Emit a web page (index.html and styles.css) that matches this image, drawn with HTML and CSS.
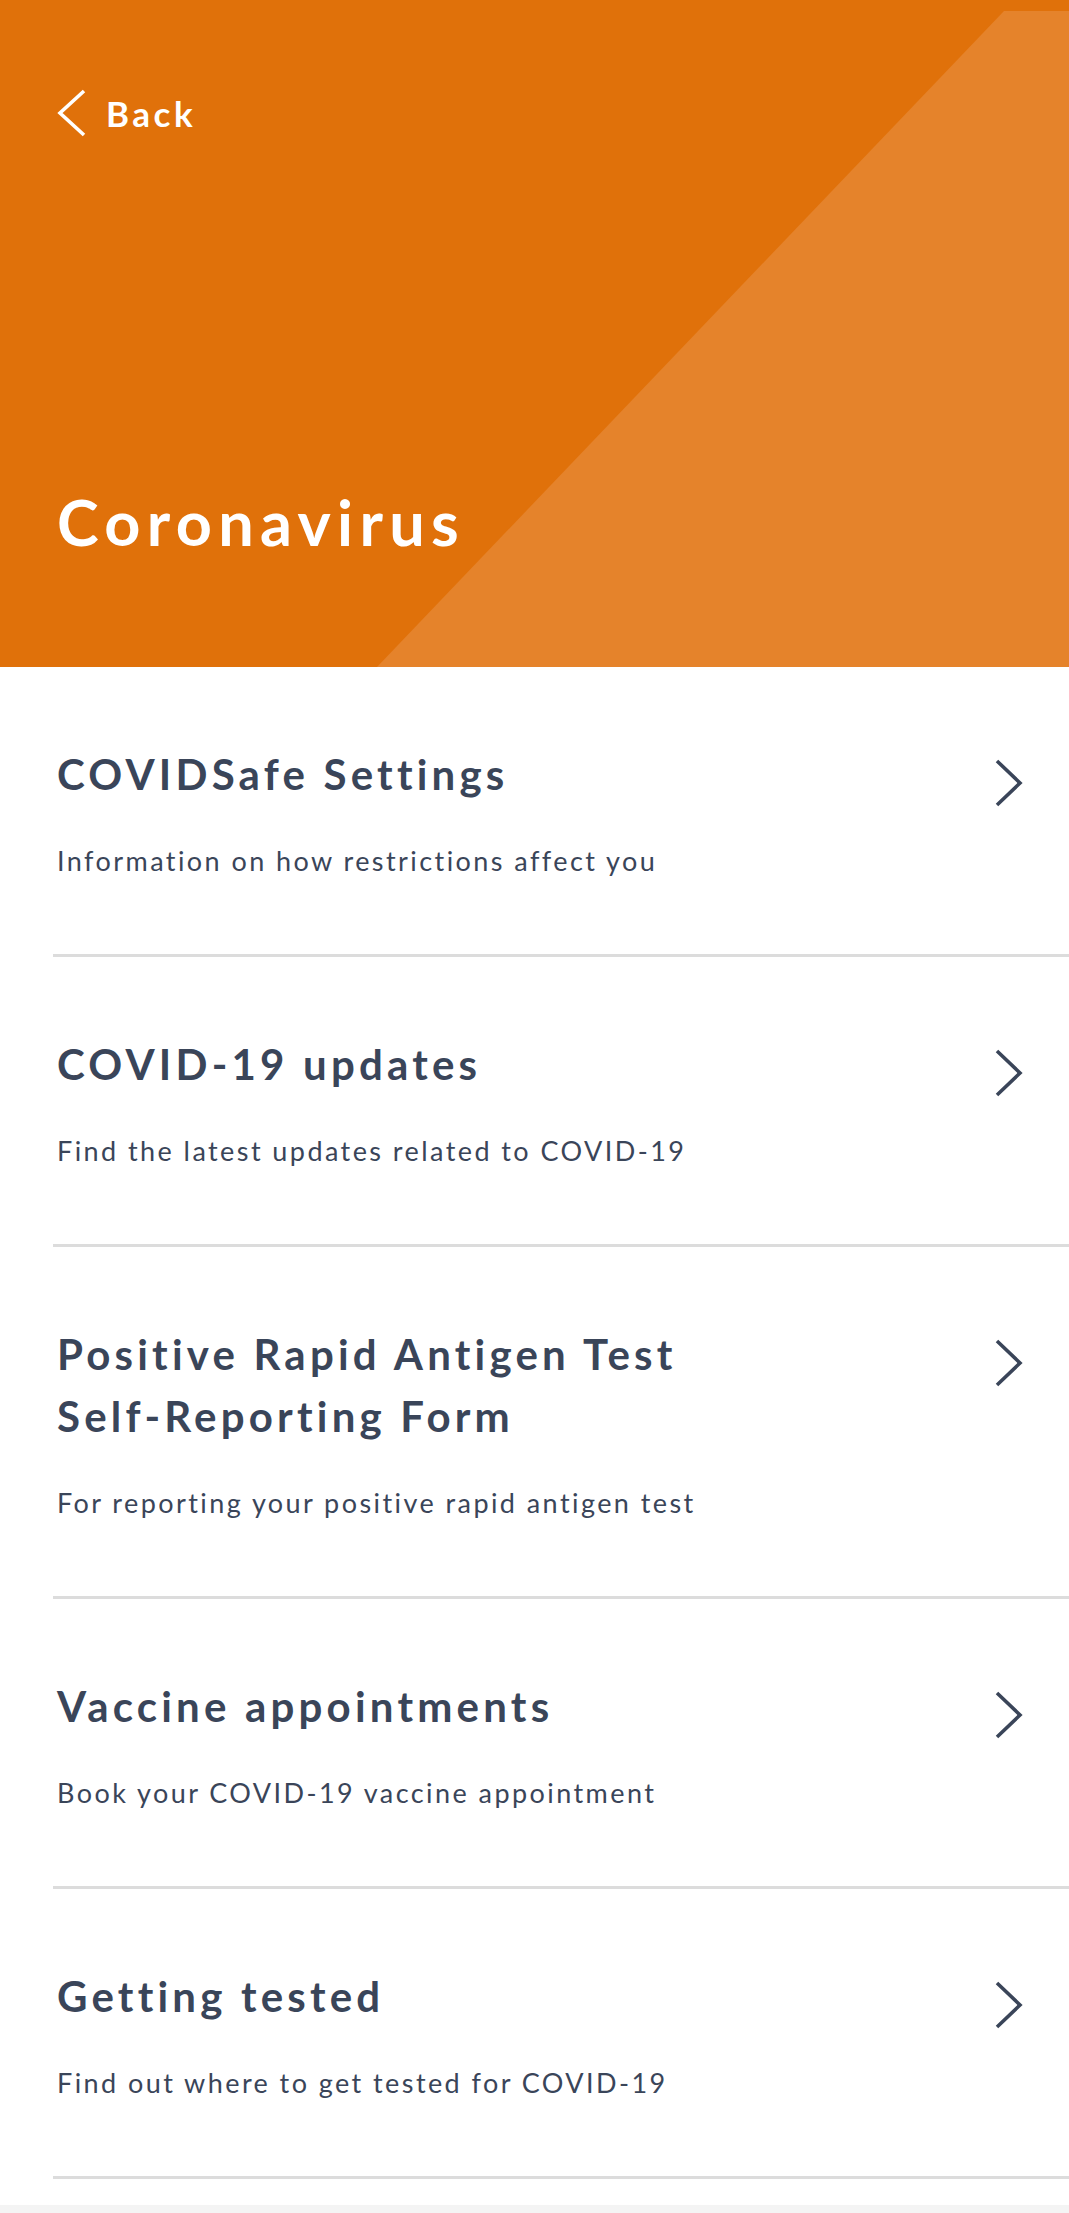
FILE: index.html
```html
<!DOCTYPE html>
<html lang="en">
<head>
<meta charset="utf-8">
<title>Coronavirus</title>
<link rel="stylesheet" href="styles.css">
</head>
<body>
<div class="page">
  <header class="hero">
    <a class="back" href="#">
      <svg class="back-icon" width="30" height="48" viewBox="0 0 30 48" aria-hidden="true">
        <polyline points="27,2 3,24 27,46" fill="none" stroke="#ffffff" stroke-width="3.6" stroke-linejoin="miter"/>
      </svg>
      <span class="back-text">Back</span>
    </a>
    <h1 class="hero-title">Coronavirus</h1>
  </header>
  <ul class="menu">
    <li class="item">
      <div class="item-text">
        <h2 class="item-title">COVIDSafe Settings</h2>
        <p class="item-sub">Information on how restrictions affect you</p>
      </div>
      <svg class="chev" width="30" height="48" viewBox="0 0 30 48" aria-hidden="true"><polyline points="3,2 26,24 3,46" fill="none" stroke="#3a4559" stroke-width="3.6"/></svg>
    </li>
    <li class="item">
      <div class="item-text">
        <h2 class="item-title">COVID-19 updates</h2>
        <p class="item-sub">Find the latest updates related to COVID-19</p>
      </div>
      <svg class="chev" width="30" height="48" viewBox="0 0 30 48" aria-hidden="true"><polyline points="3,2 26,24 3,46" fill="none" stroke="#3a4559" stroke-width="3.6"/></svg>
    </li>
    <li class="item">
      <div class="item-text">
        <h2 class="item-title">Positive Rapid Antigen Test<br>Self-Reporting Form</h2>
        <p class="item-sub">For reporting your positive rapid antigen test</p>
      </div>
      <svg class="chev" width="30" height="48" viewBox="0 0 30 48" aria-hidden="true"><polyline points="3,2 26,24 3,46" fill="none" stroke="#3a4559" stroke-width="3.6"/></svg>
    </li>
    <li class="item">
      <div class="item-text">
        <h2 class="item-title">Vaccine appointments</h2>
        <p class="item-sub">Book your COVID-19 vaccine appointment</p>
      </div>
      <svg class="chev" width="30" height="48" viewBox="0 0 30 48" aria-hidden="true"><polyline points="3,2 26,24 3,46" fill="none" stroke="#3a4559" stroke-width="3.6"/></svg>
    </li>
    <li class="item">
      <div class="item-text">
        <h2 class="item-title">Getting tested</h2>
        <p class="item-sub">Find out where to get tested for COVID-19</p>
      </div>
      <svg class="chev" width="30" height="48" viewBox="0 0 30 48" aria-hidden="true"><polyline points="3,2 26,24 3,46" fill="none" stroke="#3a4559" stroke-width="3.6"/></svg>
    </li>
  </ul>
</div>
</body>
</html>
```

FILE: styles.css
```css
* { box-sizing: border-box; }

html, body {
  margin: 0;
  padding: 0;
}

body {
  background: #f4f4f4;
  font-family: "Lato", "Noto Sans", sans-serif;
  color: #3a4559;
}

.page {
  background: #ffffff;
  padding-bottom: 26px;
}

.hero {
  position: relative;
  height: 667px;
  background: #e0710a;
  display: flex;
  flex-direction: column;
  padding: 89px 0 107px 57px;
  overflow: hidden;
}

.hero::before {
  content: "";
  position: absolute;
  inset: 0;
  background: #e5832b;
  clip-path: polygon(1004px 11px, 100% 11px, 100% 100%, 377px 100%);
}

.back {
  position: relative;
  display: flex;
  align-items: center;
  height: 48px;
  color: #ffffff;
  text-decoration: none;
}

.back-icon {
  display: block;
  margin-right: 19px;
}

.back-text {
  font-size: 35px;
  font-weight: 700;
  line-height: 46px;
  letter-spacing: 0.1em;
}

.hero-title {
  position: relative;
  margin: auto 0 0 0;
  font-size: 63px;
  line-height: 76px;
  font-weight: 700;
  letter-spacing: 0.1em;
  color: #ffffff;
}

.menu {
  list-style: none;
  margin: 0;
  padding: 0;
}

.item {
  display: flex;
  justify-content: space-between;
  align-items: flex-start;
  margin-left: 53px;
  padding: 76px 45px 75px 4px;
  border-bottom: 3px solid #dcdcdc;
}

.item-title {
  margin: 0;
  font-size: 42px;
  line-height: 62px;
  font-weight: 700;
  letter-spacing: 0.1em;
}

.item-sub {
  margin: 38px 0 0 0;
  font-size: 27px;
  line-height: 36px;
  font-weight: 400;
  letter-spacing: 0.09em;
}

.chev {
  display: block;
  margin-top: 16px;
}
```
